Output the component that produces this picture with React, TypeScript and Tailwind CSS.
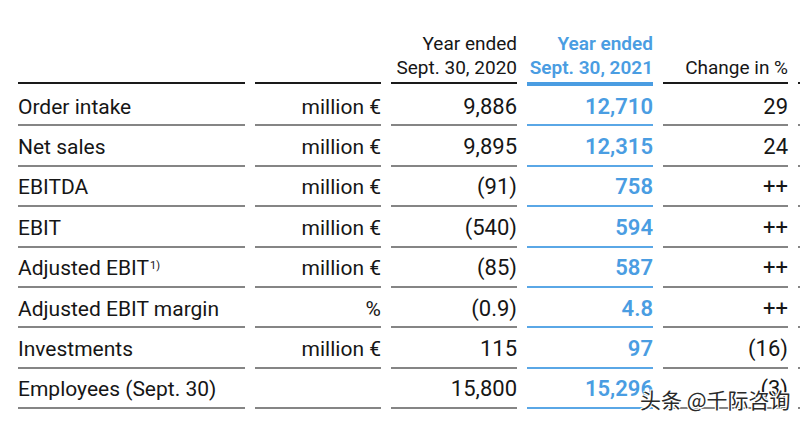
import React from 'react';

const rows = [
  { label: 'Order intake', unit: 'million €', y20: '9,886', y21: '12,710', change: '29' },
  { label: 'Net sales', unit: 'million €', y20: '9,895', y21: '12,315', change: '24' },
  { label: 'EBITDA', unit: 'million €', y20: '(91)', y21: '758', change: '++' },
  { label: 'EBIT', unit: 'million €', y20: '(540)', y21: '594', change: '++' },
  { label: 'Adjusted EBIT', sup: '1)', unit: 'million €', y20: '(85)', y21: '587', change: '++' },
  { label: 'Adjusted EBIT margin', unit: '%', y20: '(0.9)', y21: '4.8', change: '++' },
  { label: 'Investments', unit: 'million €', y20: '115', y21: '97', change: '(16)' },
  { label: 'Employees (Sept. 30)', unit: '', y20: '15,800', y21: '15,296', change: '(3)' },
];

export default function App() {
  return (
    <div
      className="relative w-[800px] h-[423px] overflow-hidden bg-white text-[#161616]"
      style={{ fontFamily: 'Roboto, "Liberation Sans", sans-serif' }}
    >
      {/* Header */}
      <div className="flex items-start h-[86px] gap-[10px] pl-[18px] text-[19px] leading-[24px]">
        <div className="w-[227px] shrink-0 h-[84px] border-b-2 border-[#1a1a1a]" />
        <div className="w-[126px] shrink-0 h-[84px] border-b-2 border-[#1a1a1a]" />
        <div className="w-[126px] shrink-0 h-[84px] border-b-2 border-[#1a1a1a] flex flex-col justify-end items-end pb-[2px]">
          <span>Year ended</span>
          <span>Sept. 30, 2020</span>
        </div>
        <div className="w-[126px] shrink-0 h-[86px] border-b-4 border-[#4a9de2] flex flex-col justify-end items-end pb-[2px] font-semibold text-[#4a9de2]">
          <span>Year ended</span>
          <span>Sept. 30, 2021</span>
        </div>
        <div className="w-[125px] shrink-0 h-[84px] border-b-2 border-[#1a1a1a] flex flex-col justify-end items-end pb-[2px]">
          <span>Change in %</span>
        </div>
        <div className="w-[126px] shrink-0 h-[84px] border-b-2 border-[#1a1a1a]" />
      </div>

      {/* Body */}
      {rows.map((r) => (
        <div key={r.label} className="flex gap-[10px] pl-[18px] text-[21px] leading-[24px]">
          <div className="w-[227px] shrink-0 h-[40.4px] border-b-2 border-[#858585] flex items-center pt-[3px]">
            <span>{r.label}</span>
            {r.sup && <span className="text-[11px] leading-[11px] self-start mt-[9px] ml-[1px]">{r.sup}</span>}
          </div>
          <div className="w-[126px] shrink-0 h-[40.4px] border-b-2 border-[#858585] flex items-center justify-end pt-[3px]">
            {r.unit}
          </div>
          <div className="w-[126px] shrink-0 h-[40.4px] border-b-2 border-[#858585] flex items-center justify-end pt-[3px] text-[22px]">
            {r.y20}
          </div>
          <div className="w-[126px] shrink-0 h-[40.4px] border-b-2 border-[#5aa7e6] flex items-center justify-end pt-[3px] text-[22px] font-semibold text-[#4a9de2]">
            {r.y21}
          </div>
          <div className="w-[125px] shrink-0 h-[40.4px] border-b-2 border-[#858585] flex items-center justify-end pt-[3px] text-[22px]">
            {r.change}
          </div>
          <div className="w-[126px] shrink-0 h-[40.4px] border-b-2 border-[#858585]" />
        </div>
      ))}

      {/* Watermark */}
      <div
        className="absolute left-[640px] top-[386px] text-[21px] leading-[26px] text-[#2a2a2a]"
        style={{
          fontFamily: '"Noto Sans CJK SC", sans-serif',
          textShadow: '1px 1px 0 #fff, -1px -1px 0 #fff, 1px -1px 0 #fff, -1px 1px 0 #fff',
        }}
      >
        头条 @千际咨询
      </div>
    </div>
  );
}
